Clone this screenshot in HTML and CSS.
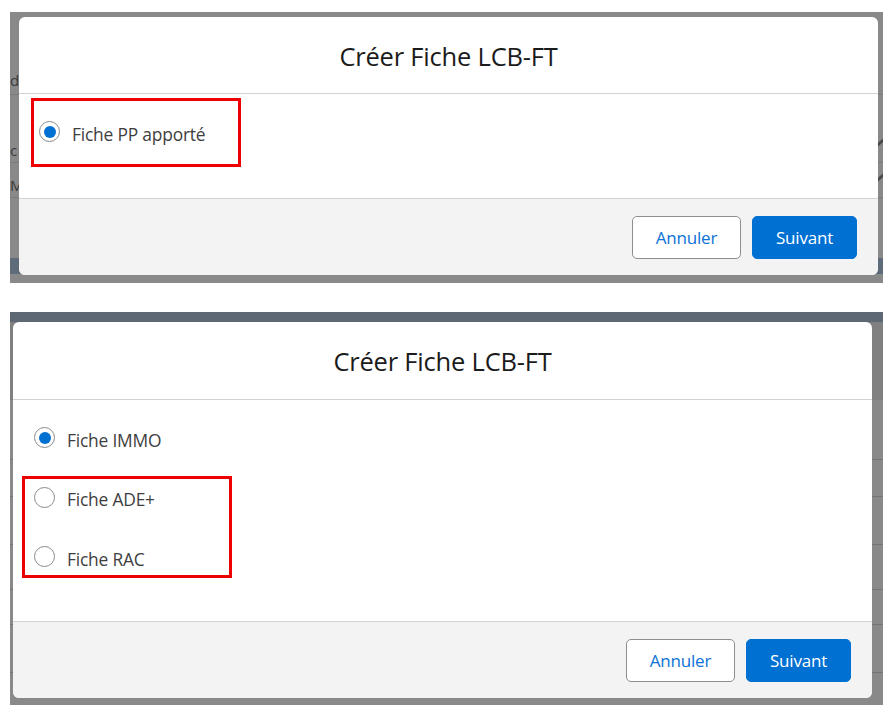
FILE: index.html
```html
<!DOCTYPE html>
<html lang="fr">
<head>
<meta charset="utf-8">
<title>Créer Fiche LCB-FT</title>
<link rel="stylesheet" href="styles.css">
</head>
<body>
<div class="page">
  <section class="shot shot-top">
    <div class="backdrop">
      <div class="bg-row bg-row-a"><span class="frag">d</span></div>
      <div class="bg-row bg-row-b"><span class="frag">c</span><span class="tick"></span></div>
      <div class="bg-row bg-row-c"><span class="frag">M</span><span class="tick"></span></div>
      <div class="bg-row bg-row-d"></div>
      <div class="bg-band"></div>
    </div>
    <div class="modal modal-top">
      <header class="modal-header header-top"><h2 class="modal-title">Créer Fiche LCB-FT</h2></header>
      <div class="modal-body body-top">
        <div class="radio-list">
          <label class="radio-item"><span class="radio checked"></span><span class="radio-label">Fiche PP apporté</span></label>
        </div>
        <div class="highlight hl-top"></div>
      </div>
      <footer class="modal-footer">
        <button class="btn btn-neutral">Annuler</button>
        <button class="btn btn-brand">Suivant</button>
      </footer>
    </div>
  </section>

  <section class="shot shot-bottom">
    <div class="backdrop">
      <div class="bg-topband"></div>
      <div class="bg-upper"></div>
      <div class="bg-line l1"></div>
      <div class="bg-line l2"></div>
      <div class="bg-line l3"></div>
      <div class="bg-line l4"></div>
      <div class="bg-line l5"></div>
      <div class="bg-line l6"></div>
    </div>
    <div class="modal modal-bottom">
      <header class="modal-header"><h2 class="modal-title">Créer Fiche LCB-FT</h2></header>
      <div class="modal-body body-bottom">
        <div class="radio-list">
          <label class="radio-item"><span class="radio checked"></span><span class="radio-label">Fiche IMMO</span></label>
          <label class="radio-item"><span class="radio"></span><span class="radio-label">Fiche ADE+</span></label>
          <label class="radio-item"><span class="radio"></span><span class="radio-label">Fiche RAC</span></label>
        </div>
        <div class="highlight hl-bottom"></div>
      </div>
      <footer class="modal-footer">
        <button class="btn btn-neutral">Annuler</button>
        <button class="btn btn-brand">Suivant</button>
      </footer>
    </div>
  </section>
</div>
</body>
</html>
```
FILE: styles.css
```css
* { box-sizing: border-box; }
html, body { margin: 0; padding: 0; background: #ffffff; }
body {
  font-family: "Open Sans", "Noto Sans", "Liberation Sans", sans-serif;
  width: 883px;
  height: 705px;
  overflow: hidden;
}
.page {
  padding: 12px 0 0 10px;
  display: flex;
  flex-direction: column;
  gap: 29px;
}
.shot {
  position: relative;
  background: #898989;
  overflow: hidden;
}
.shot-top { height: 271px; }
.shot-bottom { height: 400px; }

/* backdrop (page behind the modal) */
.backdrop { display: flex; flex-direction: column; }
.bg-row {
  position: relative;
  border-bottom: 1px solid #7a7a7a;
  color: #3a3a3a;
  font-size: 15px;
  display: flex;
  align-items: flex-end;
  justify-content: space-between;
}
.bg-row-a { height: 83px; padding-bottom: 6px; }
.bg-row-b { height: 68px; padding-bottom: 4px; }
.bg-row-c { height: 35px; padding-bottom: 4px; }
.bg-row-d { height: 60px; border-bottom: none; }
.bg-band { height: 16px; background: #5f6b78; }
.frag { margin-left: 0; line-height: 1; }
.tick {
  width: 9px;
  height: 3px;
  background: #4a4a4a;
  transform: rotate(-40deg);
  margin: 0 -2px 14px 0;
}
.bg-topband { height: 10px; background: #5d6874; }
.bg-upper { height: 78px; background: #808080; }
.bg-line { height: 1px; background: #747474; }
.l1 { margin-top: 59px; }
.l2 { margin-top: 36px; }
.l3 { margin-top: 47px; }
.l4 { margin-top: 44px; }
.l5 { margin-top: 34px; }
.l6 { margin-top: 47px; }

/* modal */
.modal {
  position: absolute;
  width: 859px;
  background: #ffffff;
  border-radius: 6px;
  display: flex;
  flex-direction: column;
  overflow: hidden;
}
.modal-top { left: 9px; top: 5px; height: 258px; }
.modal-bottom { left: 3px; top: 10px; height: 376px; }

.modal-header {
  height: 78px;
  border-bottom: 1px solid #d2d2d2;
  display: flex;
  align-items: center;
  justify-content: center;
}
.header-top { height: 77px; }
.modal-title {
  margin: 0;
  font-weight: 400;
  font-size: 25.5px;
  color: #1b1b1b;
  letter-spacing: -0.2px;
  padding-top: 1px;
}
.modal-body {
  position: relative;
  border-bottom: 1px solid #d2d2d2;
  padding: 27px 20px 0 20px;
}
.body-top { height: 105px; padding-top: 27px; }
.body-bottom { height: 222px; padding-left: 21px; }

.radio-list { display: flex; flex-direction: column; gap: 38.5px; }
.radio-item {
  display: flex;
  align-items: center;
  gap: 12px;
  height: 21px;
}
.radio {
  width: 21px;
  height: 21px;
  border-radius: 50%;
  border: 1.5px solid #8a8a8a;
  background: #ffffff;
  display: flex;
  align-items: center;
  justify-content: center;
  flex: none;
}
.radio.checked::after {
  content: "";
  width: 12px;
  height: 12px;
  border-radius: 50%;
  background: #0070d2;
}
.radio-label {
  font-size: 17.4px;
  color: #3e3e3e;
  letter-spacing: -0.2px;
  padding-top: 4px;
}

.highlight {
  position: absolute;
  border: 3px solid #ee0000;
  pointer-events: none;
}
.hl-top { left: 12px; top: 4px; width: 210px; height: 69px; }
.hl-bottom { left: 9px; top: 76px; width: 210px; height: 102px; }

.modal-footer {
  flex: 1;
  background: #f3f3f3;
  display: flex;
  align-items: center;
  justify-content: flex-end;
  gap: 11px;
  padding: 0 21px 0 0;
}
.btn {
  height: 43px;
  border-radius: 5px;
  font-family: inherit;
  font-size: 17px;
  padding: 0 22px;
  letter-spacing: -0.2px;
  cursor: pointer;
}
.btn-neutral {
  width: 109px;
  background: #ffffff;
  border: 1px solid #8e8e8e;
  color: #0b72d6;
}
.btn-brand {
  width: 105px;
  background: #0070d2;
  border: 1px solid #0070d2;
  color: #ffffff;
}
```
